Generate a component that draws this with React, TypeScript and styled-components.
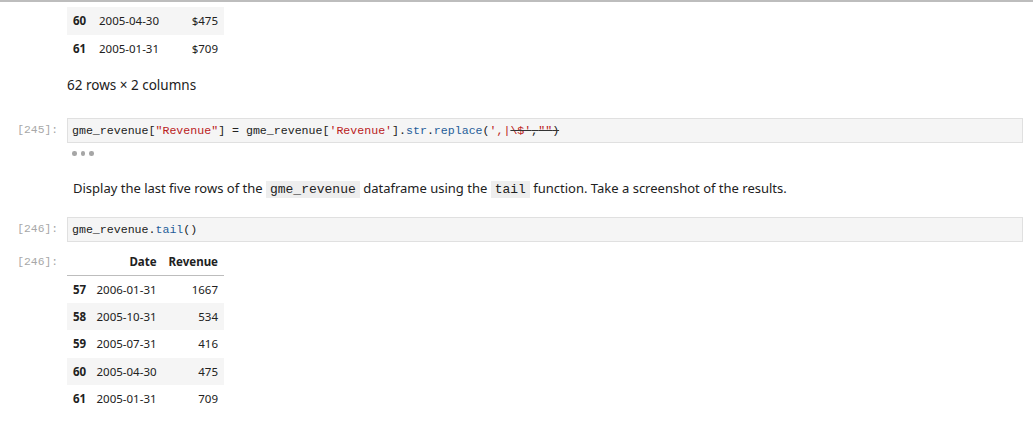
import React from "react";
import styled, { createGlobalStyle } from "styled-components";

const Global = createGlobalStyle`
  html, body { margin: 0; padding: 0; background: #fff; }
  body { font-family: "Noto Sans", "Open Sans", sans-serif; color: #212121; }
`;

const Page = styled.div`
  border-top: 2px solid #bdbdbd;
  width: 1033px;
  height: 425px;
  overflow: hidden;
  display: flex;
  flex-direction: column;
`;

const Row = styled.div<{ $mt?: number }>`
  display: flex;
  align-items: flex-start;
  margin-top: ${(p) => p.$mt ?? 0}px;
`;

const Prompt = styled.div<{ $pt?: number }>`
  width: 58px;
  flex: none;
  padding-right: 9px;
  padding-top: ${(p) => p.$pt ?? 0}px;
  text-align: right;
  font-family: "Liberation Mono", monospace;
  font-size: 11.3px;
  color: #a8a8a8;
  line-height: 14px;
`;

const CodeBox = styled.div`
  width: 956px;
  height: 25px;
  box-sizing: border-box;
  background: #f5f5f5;
  border: 1px solid #e0e0e0;
  padding: 0 0 0 4px;
  font-family: "Liberation Mono", monospace;
  font-size: 11.6px;
  line-height: 23px;
  color: #212121;
  white-space: pre;
`;

const Str = styled.span`
  color: #ba2121;
`;

const Prop = styled.span`
  color: #1f5d99;
`;

const Strike = styled.span`
  text-decoration: line-through;
  text-decoration-color: #333;
`;

const Ellipsis = styled.div`
  margin: 8px 0 0 72px;
  display: flex;
  gap: 4px;
`;

const Dot = styled.span`
  width: 4.5px;
  height: 4.5px;
  border-radius: 50%;
  background: #a6a6a6;
`;

const Table = styled.table`
  border-collapse: collapse;
  font-size: 11.5px;
  width: 157px;
  color: #212121;
`;

const Th = styled.th`
  font-weight: 700;
  text-align: right;
  padding: 0 6px;
  height: 27px;
  border-bottom: 1px solid #bdbdbd;
`;

const Tr = styled.tr<{ $striped?: boolean }>`
  background: ${(p) => (p.$striped ? "#f5f5f5" : "transparent")};
  height: 27.5px;
`;

const IndexCell = styled.th`
  font-weight: 700;
  text-align: left;
  padding: 0 0 0 6px;
  width: 20px;
`;

const Td = styled.td<{ $right?: boolean }>`
  text-align: ${(p) => (p.$right ? "right" : "left")};
  padding: 0 6px;
  white-space: nowrap;
`;

const Caption = styled.div`
  margin: 15px 0 0 67px;
  font-size: 13.5px;
  line-height: 16px;
`;

const Markdown = styled.div`
  margin: 23px 0 0 73px;
  font-size: 13px;
  line-height: 18px;
`;

const InlineCode = styled.code`
  font-family: "Liberation Mono", monospace;
  font-size: 13px;
  background: #eeeeee;
  padding: 1px 4px;
`;

const OutputArea = styled.div`
  padding-left: 67px;
  margin-top: 5px;
`;

type R = { idx: number; date: string; val: string };

const DataTable: React.FC<{ rows: R[]; header?: boolean; stripeStart: boolean }> = ({ rows, header, stripeStart }) => (
  <Table>
    {header && (
      <thead>
        <tr>
          <Th />
          <Th>Date</Th>
          <Th>Revenue</Th>
        </tr>
      </thead>
    )}
    <tbody>
      {rows.map((r, i) => (
        <Tr key={r.idx} $striped={stripeStart ? i % 2 === 0 : i % 2 === 1}>
          <IndexCell>{r.idx}</IndexCell>
          <Td>{r.date}</Td>
          <Td $right>{r.val}</Td>
        </Tr>
      ))}
    </tbody>
  </Table>
);

const topRows: R[] = [
  { idx: 60, date: "2005-04-30", val: "$475" },
  { idx: 61, date: "2005-01-31", val: "$709" },
];

const tailRows: R[] = [
  { idx: 57, date: "2006-01-31", val: "1667" },
  { idx: 58, date: "2005-10-31", val: "534" },
  { idx: 59, date: "2005-07-31", val: "416" },
  { idx: 60, date: "2005-04-30", val: "475" },
  { idx: 61, date: "2005-01-31", val: "709" },
];

export default function App() {
  return (
    <>
      <Global />
      <Page>
        <OutputArea>
          <DataTable rows={topRows} stripeStart />
        </OutputArea>
        <Caption>62 rows × 2 columns</Caption>
        <Row $mt={25}>
          <Prompt $pt={5}>[245]:</Prompt>
          <CodeBox>
            gme_revenue[<Str>"Revenue"</Str>] = gme_revenue[<Str>'Revenue'</Str>].<Prop>str</Prop>.<Prop>replace</Prop>(
            <Str>',|</Str>
            <Strike>
              <Str>\$'</Str>,<Str>""</Str>)
            </Strike>
          </CodeBox>
        </Row>
        <Ellipsis>
          <Dot />
          <Dot />
          <Dot />
        </Ellipsis>
        <Markdown>
          Display the last five rows of the <InlineCode>gme_revenue</InlineCode> dataframe using the{" "}
          <InlineCode>tail</InlineCode> function. Take a screenshot of the results.
        </Markdown>
        <Row $mt={18}>
          <Prompt $pt={5}>[246]:</Prompt>
          <CodeBox>
            gme_revenue.<Prop>tail</Prop>()
          </CodeBox>
        </Row>
        <Row $mt={6}>
          <Prompt $pt={7}>[246]:</Prompt>
          <DataTable rows={tailRows} header stripeStart={false} />
        </Row>
      </Page>
    </>
  );
}
